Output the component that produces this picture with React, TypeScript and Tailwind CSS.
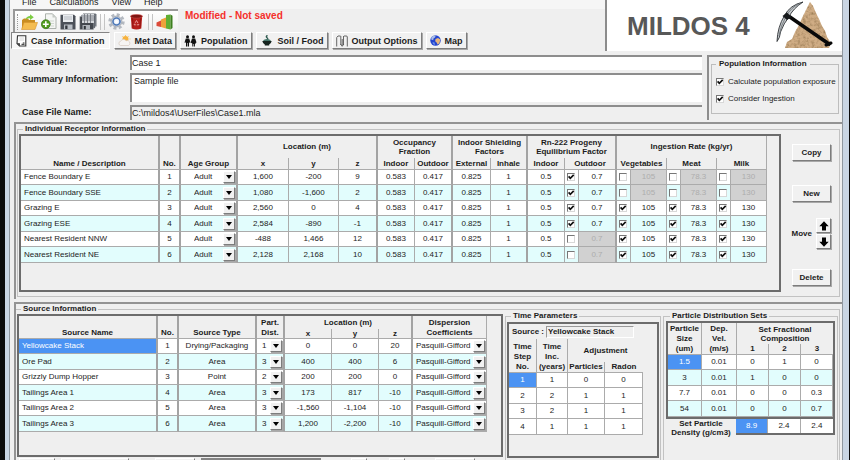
import React from 'react';

type Receptor = {
  name: string;
  x: string;
  y: string;
  z: string;
  outdoor: boolean;
  ingestion: boolean;
};

const receptors: Receptor[] = [
  { name: 'Fence Boundary E', x: '1,600', y: '-200', z: '9', outdoor: true, ingestion: false },
  { name: 'Fence Boundary SSE', x: '1,080', y: '-1,600', z: '2', outdoor: true, ingestion: false },
  { name: 'Grazing E', x: '2,560', y: '0', z: '4', outdoor: true, ingestion: true },
  { name: 'Grazing ESE', x: '2,584', y: '-890', z: '-1', outdoor: true, ingestion: true },
  { name: 'Nearest Resident NNW', x: '-488', y: '1,466', z: '12', outdoor: false, ingestion: true },
  { name: 'Nearest Resident NE', x: '2,128', y: '2,168', z: '10', outdoor: false, ingestion: true },
];

const sources = [
  { name: 'Yellowcake Stack', type: 'Drying/Packaging', dist: '1', x: '0', y: '0', z: '20' },
  { name: 'Ore Pad', type: 'Area', dist: '3', x: '400', y: '400', z: '6' },
  { name: 'Grizzly Dump Hopper', type: 'Point', dist: '2', x: '200', y: '200', z: '0' },
  { name: 'Tailings Area 1', type: 'Area', dist: '3', x: '173', y: '817', z: '-10' },
  { name: 'Tailings Area 2', type: 'Area', dist: '3', x: '-1,560', y: '-1,104', z: '-10' },
  { name: 'Tailings Area 3', type: 'Area', dist: '3', x: '1,200', y: '-2,200', z: '-10' },
];

const timeSteps = [
  ['1', '1', '0', '0'],
  ['2', '2', '1', '1'],
  ['3', '2', '1', '1'],
  ['4', '1', '1', '1'],
];

const particles = [
  ['1.5', '0.01', '0', '1', '0'],
  ['3', '0.01', '1', '0', '0'],
  ['7.7', '0.01', '0', '0', '0.3'],
  ['54', '0.01', '0', '0', '0.7'],
];

const ingestionRates = [
  { label: 'Vegetables', value: '105' },
  { label: 'Meat', value: '78.3' },
  { label: 'Milk', value: '130' },
];

const tableBase = 'w-full table-fixed border-separate border-spacing-0 text-center text-[8px] leading-[10px]';
const raised = 'border border-t-white border-l-white border-r-[#7d7d7d] border-b-[#7d7d7d] bg-[#f1f1f1] shadow-[1px_1px_0_#a8a8a8]';
const major = 'border-r-2 border-r-[#a3a3a3]';
const minor = 'border-r border-r-[#ababab]';
const under = 'border-b border-b-[#ababab]';
const selected = 'bg-[#4b93f3] text-white';

/* ---------- small controls ---------- */

const CheckBox: React.FC<{ label: string; checked: boolean; id?: string }> = ({ label, checked, id }) => (
  <span className="mx-auto grid size-2 shrink-0">
    <input
      id={id}
      type="checkbox"
      aria-label={label}
      defaultChecked={checked}
      className="peer col-start-1 row-start-1 size-2 appearance-none border border-t-[#777] border-l-[#777] border-r-[#d8d8d8] border-b-[#d8d8d8] bg-white"
    />
    <svg viewBox="0 0 8 8" className="pointer-events-none invisible col-start-1 row-start-1 size-2 peer-checked:visible">
      <path d="M1.6 3.4 3.3 5.3 6.7 1.9" fill="none" stroke="#111" strokeWidth="1.7" />
    </svg>
  </span>
);

const DropDown: React.FC<{ label: string; value: string; options: string[]; pad: string }> = ({ label, value, options, pad }) => (
  <span className="grid items-center">
    <select
      aria-label={label}
      defaultValue={value}
      className={`col-start-1 row-start-1 h-[14px] w-full appearance-none bg-transparent text-[8px] leading-[14px] ${pad}`}
    >
      {options.map((o) => (
        <option key={o}>{o}</option>
      ))}
    </select>
    <span className={`pointer-events-none col-start-1 row-start-1 mr-px grid size-3 place-items-center justify-self-end ${raised}`}>
      <svg viewBox="0 0 6 4" className="h-1 w-1.5">
        <path d="M0 0H6L3 4Z" fill="#000" />
      </svg>
    </span>
  </span>
);

const PushButton: React.FC<{ children: React.ReactNode; className?: string }> = ({ children, className = '' }) => (
  <button type="button" className={`h-[17px] w-[39px] text-[8px] font-bold ${raised} ${className}`}>
    {children}
  </button>
);

/* ---------- icons ---------- */

const OpenIcon = () => (
  <svg viewBox="0 0 17 16" className="h-4 w-[17px]">
    <path d="M1 6 3 4.5H7L8 6H14V15H1Z" fill="#c98d22" />
    <path d="M3 8.5H16.5L14 15.5H.5Z" fill="#f4bc50" stroke="#d6942b" strokeWidth=".6" />
    <path d="M4.5 6C5 3 7 2 9 2V.3L12.8 3.2 9 6V4.3C7.5 4.3 6 4.6 4.5 6Z" fill="#7ccc43" />
  </svg>
);

const NewIcon = () => (
  <svg viewBox="0 0 16 17" className="h-[17px] w-4">
    <path d="M4.5 .8H11.5L15 4.5V15.5H4.5Z" fill="#f4f6f4" stroke="#a5aaa5" strokeWidth=".9" />
    <path d="M11.5 .8V4.5H15Z" fill="#c5cac5" />
    <path d="M8 8H13M9 10.5H13M10 13H13" stroke="#c9cfc9" strokeWidth=".8" />
    <circle cx="4.8" cy="11.2" r="4.5" fill="#4f9a1c" stroke="#2f6911" strokeWidth=".6" />
    <path d="M4.8 8.3V14.1M1.9 11.2H7.7" stroke="#fff" strokeWidth="1.6" />
  </svg>
);

const SaveIcon = () => (
  <svg viewBox="0 0 16 16" className="size-4">
    <path d="M.5 .8H14L15.5 2.3V15.5H.5Z" fill="#4c5159" />
    <path d="M3 1H13V8H3Z" fill="#e9ecef" />
    <path d="M4 3H12M4 5H12" stroke="#aab0b8" strokeWidth=".8" />
    <path d="M4 10.5H12.5V15.5H4Z" fill="#b9bec5" />
    <path d="M5.2 11.5H7.5V15H5.2Z" fill="#33373d" />
  </svg>
);

const SaveAllIcon = () => (
  <svg viewBox="0 0 18 17" className="h-[17px] w-[18px]">
    <path d="M4 .5H16.5L17.5 1.5V13.5H4Z" fill="#6d7279" />
    <path d="M2.5 2H15L16 3V15H2.5Z" fill="#555a61" stroke="#9a9fa6" strokeWidth=".4" />
    <path d="M.8 3.5H13.5L14.5 4.5V16.5H.8Z" fill="#43474e" stroke="#a3a8ae" strokeWidth=".4" />
    <path d="M3 1H15V10H3Z" fill="#d5d8dc" />
    <path d="M3 3H15M3 5H15M3 7H15M5.5 1V10M8.5 1V10M11.5 1V10" stroke="#6b7077" strokeWidth=".8" />
    <path d="M3.5 12H11V16.5H3.5Z" fill="#aeb3ba" />
    <path d="M4.8 13H6.8V16.3H4.8Z" fill="#2f3338" />
  </svg>
);

const GearIcon = () => (
  <svg viewBox="0 0 17 17" className="size-[17px]">
    <circle cx="8.5" cy="8.5" r="6.9" fill="none" stroke="#b4b9c0" strokeWidth="2.6" strokeDasharray="3 2.42" />
    <circle cx="8.5" cy="8.5" r="5.4" fill="#ccd1d8" stroke="#a5abb4" strokeWidth="1" />
    <circle cx="8.5" cy="8.5" r="3.5" fill="#e9f0fa" stroke="#4d78b8" strokeWidth="1.6" />
    <circle cx="8.5" cy="8.5" r="1.5" fill="#fff" />
  </svg>
);

const TrashIcon = () => (
  <svg viewBox="0 0 13 16" className="mx-0.5 h-4 w-[13px]">
    <path d="M.8 2H12.2L11.3 14.5Q6.5 16.5 1.7 14.5Z" fill="#b51f1b" />
    <path d="M2.5 4 3 13.5M10.5 4 10 13.5" stroke="#8a1210" strokeWidth=".8" />
    <ellipse cx="6.5" cy="2.3" rx="6" ry="1.9" fill="#7f1512" stroke="#d1504b" strokeWidth=".6" />
    <path d="M6.5 6.5 8.9 10.8H4.1Z" fill="none" stroke="#e79a97" strokeWidth="1" strokeDasharray="3 1" />
  </svg>
);

const ChartIcon = () => (
  <svg viewBox="0 0 17 16" className="h-4 w-[17px]">
    <path d="M.5 8.5 5 6.5V13L.5 12Z" fill="#dc4b3a" />
    <path d="M5 5.5 10 3.5V14.5L5 13Z" fill="#eda23a" />
    <path d="M10 1 14.5 .5V15.5L10 14.5Z" fill="#5fae33" />
    <path d="M14.5 .5 16.5 1.8V14L14.5 15.5Z" fill="#3d7f1f" />
  </svg>
);

const CaseIcon = () => (
  <svg viewBox="0 0 11 12" className="h-3 w-[11px]">
    <path d="M1.5 .8H9.8V11H3.5L1 8.5Z" fill="#fff" stroke="#333" strokeWidth="1.1" />
    <path d="M.8 8 4 8.2 4 11.4Z" fill="#444" />
    <path d="M5.5 9.3H8.5M6.8 8H8.5" stroke="#222" strokeWidth="1" />
    <path d="M3.5 3H8M3.5 5H8" stroke="#c6c6c6" strokeWidth=".7" />
  </svg>
);

const WeatherIcon = () => (
  <svg viewBox="0 0 13 11" className="h-[11px] w-[13px]">
    <circle cx="7.5" cy="4" r="3" fill="#f7b23c" />
    <path d="M7.5 0V1M11.5 4H12.5M4 1 4.6 1.7M11 1 10.4 1.7" stroke="#f7c25f" strokeWidth=".9" />
    <path d="M2.5 10.5A2.2 2.2 0 0 1 2.8 6.2 2.9 2.9 0 0 1 8 5.8 2.4 2.4 0 0 1 10.5 10.5Z" fill="#f6f4f2" stroke="#cbb9aa" strokeWidth=".5" />
  </svg>
);

const PeopleIcon = () => (
  <svg viewBox="0 0 13 12" className="h-3 w-[13px]">
    <circle cx="3.5" cy="1.8" r="1.5" fill="#111" />
    <circle cx="9.5" cy="1.8" r="1.5" fill="#111" />
    <path d="M1.8 3.6H5.2L6.5 7.5 5.6 8 5 6.5V11.5H3.8V8H3.2V11.5H2V6.5L1.4 8 .5 7.5Z" fill="#111" />
    <path d="M8 3.6H11.2L12.5 7.5 11.6 8 11.4 9H10.9V11.5H9.9V9H9.3V11.5H8.3V8.5L7.5 8 6.7 7.5Z" fill="#111" />
  </svg>
);

const BowlIcon = () => (
  <svg viewBox="0 0 10 11" className="mx-0.5 h-[11px] w-2.5">
    <path d="M5.5 .3Q3.5 1.5 5 2.7T5 5" fill="none" stroke="#2f5a50" strokeWidth="1.4" />
    <path d="M2 4.8Q5 3 8 4.8L9 6H1Z" fill="#47786c" />
    <path d="M.3 6H9.7Q9.2 8.8 7.2 9.4V10.5H2.8V9.4Q.8 8.8 .3 6Z" fill="#16241f" />
  </svg>
);

const OutputIcon = () => (
  <svg viewBox="0 0 12 12" className="size-3">
    <path d="M.7 11.5V2.5L2 1H4.5M4.8 1V10M7.5 1V10M8 1H10.8L11.3 2V11.5" fill="none" stroke="#666" strokeWidth="1" />
    <path d="M6.2 4V10.5M4.5 9 6.2 11.3 7.9 9" fill="none" stroke="#555" strokeWidth=".9" />
  </svg>
);

const GlobeIcon = () => (
  <svg viewBox="0 0 11 11" className="size-[11px]">
    <circle cx="5.5" cy="5.5" r="5.2" fill="#2345cf" />
    <path d="M1.5 2.3Q3.5 0 5.8 .6L5 2.5 3.5 3.5 3.2 5.3 1.2 4.5Z" fill="#a9bde6" />
    <path d="M5.5 4 8 3 10.3 4.5 9.5 8 7.8 9.8 6.6 7.5 5.2 6.3Z" fill="#e7b67c" />
    <path d="M2.5 7 4.5 7.5 5 10 3 9Z" fill="#6d8fe8" />
  </svg>
);

const RockLogo = () => (
  <svg viewBox="0 0 62 50" className="h-[50px] w-[62px]" role="img" aria-label="Pickaxe and rock">
    <defs>
      <filter id="grain" x="0" y="0" width="1" height="1">
        <feTurbulence type="fractalNoise" baseFrequency=".35" numOctaves="3" seed="4" />
        <feColorMatrix values="0 0 0 0 .35  0 0 0 0 .22  0 0 0 0 .1  2.2 0 0 0 -.9" />
        <feComposite in2="SourceGraphic" operator="in" result="noise" />
        <feMerge>
          <feMergeNode in="SourceGraphic" />
          <feMergeNode in="noise" />
        </feMerge>
      </filter>
    </defs>
    <path
      d="M38 1 34 9 30 17 27 24 23 31 20 38 15 41 13 47H57L59 42 55 36 53 30 50 25 47 18 44 12 41 5Z"
      fill="#cfac84"
      filter="url(#grain)"
    />
    <path d="M15 14 57 43" stroke="#080808" strokeWidth="3.6" strokeLinecap="round" />
    <path d="M54 44 59 42" stroke="#080808" strokeWidth="3" strokeLinecap="round" />
    <path d="M31 1Q18 4 12.5 14.5Q5.5 26 5 40.5Q8 37 8.5 31Q12 22 16.5 16.5Q21 7.5 31 1Z" fill="#c3c7ca" stroke="#2e3235" strokeWidth=".9" />
    <path d="M28 2.5Q19 6 14 15.5Q8.5 25 7 35" fill="none" stroke="#70767b" strokeWidth=".9" />
    <path d="M10.5 15 15 11.5 19.5 16 15 19Z" fill="#16191b" />
  </svg>
);

/* ---------- header ---------- */

const ToolButton: React.FC<{ label: string; children: React.ReactNode }> = ({ label, children }) => (
  <button type="button" aria-label={label} className="grid place-items-center">
    {children}
  </button>
);

const ToolSeparator = () => (
  <span className="flex h-4 gap-[3px]">
    <span className="w-px bg-[#c4c4c4]" />
    <span className="w-px bg-[#c4c4c4]" />
  </span>
);

const Tab: React.FC<{ label: string; icon: React.ReactNode; active?: boolean }> = ({ label, icon, active }) => (
  <button
    type="button"
    className={`flex h-[17px] items-center text-[9px] leading-3 font-bold whitespace-nowrap ${
      active
        ? 'gap-1 border border-t-[#858585] border-l-[#858585] border-r-white border-b-white bg-[#f7f7f7] px-1'
        : `gap-1 px-[3px] ${raised}`
    }`}
  >
    {icon}
    {label}
  </button>
);

const Header = () => (
  <header className="flex justify-between">
    <div className="min-w-0 flex-1">
      <nav className="flex h-[9px] items-end gap-[13px] bg-[#f6f6f6] pb-px pl-3 text-[9px] leading-[11px]">
        <a href="#file">File</a>
        <a href="#calculations">Calculations</a>
        <a href="#view">View</a>
        <a href="#help">Help</a>
      </nav>
      <div className="flex items-start pl-[3px]">
        <div className="flex h-[23px] items-center gap-[3px] border-t-2 border-l-2 border-t-[#999] border-l-[#999] bg-gradient-to-b from-white to-[#efefef] pr-[5px] pl-0.5">
          <span className="h-4 border-l border-dotted border-[#999]" />
          <ToolButton label="Open"><OpenIcon /></ToolButton>
          <ToolButton label="New"><NewIcon /></ToolButton>
          <ToolButton label="Save"><SaveIcon /></ToolButton>
          <ToolButton label="Save all"><SaveAllIcon /></ToolButton>
          <ToolSeparator />
          <ToolButton label="Settings"><GearIcon /></ToolButton>
          <ToolButton label="Delete case"><TrashIcon /></ToolButton>
          <ToolSeparator />
          <ToolButton label="Results"><ChartIcon /></ToolButton>
        </div>
        <p className="ml-[7px] text-[10px] leading-[13px] font-bold text-[#f5302b]">Modified - Not saved</p>
      </div>
      <div className="flex gap-1 pl-px">
        <Tab active label="Case Information" icon={<CaseIcon />} />
        <Tab label="Met Data" icon={<WeatherIcon />} />
        <Tab label="Population" icon={<PeopleIcon />} />
        <Tab label="Soil / Food" icon={<BowlIcon />} />
        <Tab label="Output Options" icon={<OutputIcon />} />
        <Tab label="Map" icon={<GlobeIcon />} />
      </div>
    </div>
    <div className="flex h-[51px] w-[237px] items-center justify-between border-l-2 border-[#8c8c8c] bg-white pr-2 pl-5">
      <h1 className="text-[26px] leading-[30px] font-bold whitespace-nowrap text-[#585858]">MILDOS 4</h1>
      <RockLogo />
    </div>
  </header>
);

const field = 'border-t-2 border-l-2 border-t-[#8d8d8d] border-l-[#8d8d8d] text-[9px]';

const CaseForm = () => (
  <section className="mt-1 flex gap-[5px] pl-3">
    <div className="grid flex-1 grid-cols-[108px_1fr] content-start gap-y-[3px] text-[9px] leading-[14px]">
      <label htmlFor="title" className="font-bold">Case Title:</label>
      <input id="title" defaultValue="Case 1" className={`h-[15px] bg-white pb-0.5 ${field}`} />
      <label htmlFor="summary" className="font-bold leading-[12px]">Summary Information:</label>
      <textarea id="summary" defaultValue="Sample file" className={`h-[29px] resize-none bg-white pl-0.5 leading-[13px] ${field}`} />
      <label htmlFor="path" className="font-bold">Case File Name:</label>
      <input id="path" readOnly value="C:\mildos4\UserFiles\Case1.mla" className={`h-[15px] bg-[#efefef] pb-0.5 ${field}`} />
    </div>
    <div className="w-[135px] border-t-2 border-l-2 border-[#8d8d8d] pt-0.5 pr-[3px] pl-0.5">
      <fieldset className="h-[55px] border border-[#bdbdbd] text-[8px]">
        <legend className="ml-1 px-[3px] leading-[10px] font-bold">Population Information</legend>
        <div className="flex flex-col gap-[7px] pt-2 pl-1">
          <div className="flex items-center gap-1 leading-[10px]">
            <span className="flex"><CheckBox id="exposure" label="Calculate population exposure" checked /></span>
            <label htmlFor="exposure" className="whitespace-nowrap">Calculate population exposure</label>
          </div>
          <div className="flex items-center gap-1 leading-[10px]">
            <span className="flex"><CheckBox id="ingestion" label="Consider Ingestion" checked /></span>
            <label htmlFor="ingestion" className="whitespace-nowrap">Consider Ingestion</label>
          </div>
        </div>
      </fieldset>
    </div>
  </section>
);

/* ---------- receptors ---------- */

const ReceptorTable = () => (
  <table className={tableBase}>
    <colgroup>
      <col />
      <col className="w-[21px]" />
      <col className="w-[57px]" />
      <col className="w-[51px]" />
      <col className="w-[50px]" />
      <col className="w-[39px]" />
      <col className="w-[37px]" />
      <col className="w-[38px]" />
      <col className="w-[38px]" />
      <col className="w-[37px]" />
      <col className="w-[37px]" />
      <col className="w-[14px]" />
      <col className="w-[38px]" />
      <col className="w-[14px]" />
      <col className="w-[36px]" />
      <col className="w-[14px]" />
      <col className="w-[36px]" />
      <col className="w-[14px]" />
      <col className="w-[36px]" />
    </colgroup>
    <thead>
      <tr className="h-[22px]">
        <th rowSpan={2} className={`align-bottom ${major} ${under}`}>Name / Description</th>
        <th rowSpan={2} className={`align-bottom ${major} ${under}`}>No.</th>
        <th rowSpan={2} className={`align-bottom ${major} ${under}`}>Age Group</th>
        <th colSpan={3} className={major}>Location (m)</th>
        <th colSpan={2} className={`leading-[9px] ${major}`}>Occupancy<br />Fraction</th>
        <th colSpan={2} className={`leading-[9px] whitespace-nowrap ${major}`}>Indoor Shielding<br />Factors</th>
        <th colSpan={3} className={`leading-[9px] whitespace-nowrap ${major}`}>Rn-222 Progeny<br />Equilibrium Factor</th>
        <th colSpan={6} className={minor}>Ingestion Rate (kg/yr)</th>
      </tr>
      <tr className="h-3">
        <th className={`${minor} ${under}`}>x</th>
        <th className={`${minor} ${under}`}>y</th>
        <th className={`${major} ${under}`}>z</th>
        <th className={`${minor} ${under}`}>Indoor</th>
        <th className={`${major} ${under}`}>Outdoor</th>
        <th className={`${minor} ${under}`}>External</th>
        <th className={`${major} ${under}`}>Inhale</th>
        <th className={`${minor} ${under}`}>Indoor</th>
        <th colSpan={2} className={`${major} ${under}`}>Outdoor</th>
        {ingestionRates.map((r) => (
          <th key={r.label} colSpan={2} className={`${minor} ${under}`}>{r.label}</th>
        ))}
      </tr>
    </thead>
    <tbody>
      {receptors.map((r, i) => (
        <tr key={r.name} className="h-4 bg-white odd:h-[15px] even:bg-[#e2fdfd]">
          <td className={`pl-[3px] text-left ${major} ${under}`}>{r.name}</td>
          <td className={`${major} ${under}`}>{i + 1}</td>
          <td className={`${major} ${under}`}>
            <DropDown label={`Age group of ${r.name}`} value="Adult" options={['Infant', 'Child', 'Teenager', 'Adult']} pad="pl-[13px]" />
          </td>
          <td className={`${minor} ${under}`}>{r.x}</td>
          <td className={`${minor} ${under}`}>{r.y}</td>
          <td className={`${major} ${under}`}>{r.z}</td>
          <td className={`${minor} ${under}`}>0.583</td>
          <td className={`${major} ${under}`}>0.417</td>
          <td className={`${minor} ${under}`}>0.825</td>
          <td className={`${major} ${under}`}>1</td>
          <td className={`${minor} ${under}`}>0.5</td>
          <td className={`${minor} ${under}`}>
            <CheckBox label={`Outdoor factor for ${r.name}`} checked={r.outdoor} />
          </td>
          <td className={`${major} ${under} ${r.outdoor ? '' : 'bg-[#d1d1d1] text-[#adadad]'}`}>0.7</td>
          {ingestionRates.map((rate) => (
            <React.Fragment key={rate.label}>
              <td className={`${minor} ${under}`}>
                <CheckBox label={`${rate.label} for ${r.name}`} checked={r.ingestion} />
              </td>
              <td className={`${minor} ${under} ${r.ingestion ? '' : 'bg-[#d1d1d1] text-[#adadad]'}`}>{rate.value}</td>
            </React.Fragment>
          ))}
        </tr>
      ))}
    </tbody>
  </table>
);

const ArrowButton: React.FC<{ label: string; down?: boolean }> = ({ label, down }) => (
  <button type="button" aria-label={label} className={`grid size-[15px] place-items-center ${raised}`}>
    <svg viewBox="0 0 10 10" className={down ? 'size-2.5 rotate-180' : 'size-2.5'}>
      <path d="M5 .3 9.7 5.2H7V9.5H3V5.2H.3Z" fill="#000" />
    </svg>
  </button>
);

const ReceptorPanel = () => (
  <section className="mt-0.5 ml-1 border-t-2 border-l-2 border-[#939393] pr-0.5 pb-0.5 pl-px">
    <fieldset className="border border-[#c2c2c2] pb-1">
      <legend className="ml-[5px] px-0.5 text-[8px] leading-[10px] font-bold">Individual Receptor Information</legend>
      <div className="flex pl-px">
        <div className="flex-1 border-2 border-[#6c6c6c] pr-3 pb-[27px]">
          <ReceptorTable />
        </div>
        <div className="flex w-[58px] flex-col items-end pt-2.5 pr-2 text-[8px] font-bold">
          <PushButton>Copy</PushButton>
          <PushButton className="mt-6">New</PushButton>
          <div className="mt-4 flex items-center gap-1">
            <span>Move</span>
            <div className="flex flex-col gap-px">
              <ArrowButton label="Move up" />
              <ArrowButton label="Move down" down />
            </div>
          </div>
          <PushButton className="mt-5">Delete</PushButton>
        </div>
      </div>
    </fieldset>
  </section>
);

/* ---------- sources, time steps, particles ---------- */

const SourceTable = () => (
  <table className={tableBase}>
    <colgroup>
      <col />
      <col className="w-[21px]" />
      <col className="w-[78px]" />
      <col className="w-[28px]" />
      <col className="w-[47px]" />
      <col className="w-[47px]" />
      <col className="w-[34px]" />
      <col className="w-[74px]" />
    </colgroup>
    <thead>
      <tr className="h-[13px]">
        <th rowSpan={2} className={`align-bottom ${major} ${under}`}>Source Name</th>
        <th rowSpan={2} className={`align-bottom ${major} ${under}`}>No.</th>
        <th rowSpan={2} className={`align-bottom ${major} ${under}`}>Source Type</th>
        <th rowSpan={2} className={`align-bottom ${major} ${under}`}>Part.<br />Dist.</th>
        <th colSpan={3} className={major}>Location (m)</th>
        <th rowSpan={2} className={`align-bottom ${minor} ${under}`}>Dispersion<br />Coefficients</th>
      </tr>
      <tr className="h-[10px]">
        <th className={`leading-[9px] ${minor} ${under}`}>x</th>
        <th className={`leading-[9px] ${minor} ${under}`}>y</th>
        <th className={`leading-[9px] ${major} ${under}`}>z</th>
      </tr>
    </thead>
    <tbody>
      {sources.map((s, i) => (
        <tr key={s.name} className="h-4 bg-white odd:h-[15px] even:bg-[#e2fdfd]">
          <td className={`pl-[3px] text-left ${major} ${under} ${i === 0 ? selected : ''}`}>{s.name}</td>
          <td className={`${major} ${under}`}>{i + 1}</td>
          <td className={`${major} ${under}`}>{s.type}</td>
          <td className={`${major} ${under}`}>
            <DropDown label={`Particle distribution of ${s.name}`} value={s.dist} options={['1', '2', '3']} pad="pl-[5px]" />
          </td>
          <td className={`${minor} ${under}`}>{s.x}</td>
          <td className={`${minor} ${under}`}>{s.y}</td>
          <td className={`${major} ${under}`}>{s.z}</td>
          <td className={`${minor} ${under}`}>
            <DropDown label={`Dispersion of ${s.name}`} value="Pasquill-Gifford" options={['Pasquill-Gifford', 'Briggs']} pad="pl-[3px]" />
          </td>
        </tr>
      ))}
    </tbody>
  </table>
);

const TimePanel = () => (
  <fieldset className="-mt-[3px] w-[156px] border border-[#c2c2c2] px-px pt-px">
    <legend className="ml-1 px-0.5 text-[8px] leading-[10px] font-bold">Time Parameters</legend>
    <div className="h-[136px] border-2 border-[#6c6c6c] pr-[14px]">
      <div className="flex h-[15px] items-center gap-0.5 pl-[3px] text-[8px] font-bold">
        <label htmlFor="source" className="whitespace-nowrap">Source :</label>
        <input id="source" readOnly value="Yellowcake Stack" className="h-3 w-[88px] border border-t-[#999] border-l-[#999] border-r-white border-b-white pl-px leading-[10px]" />
      </div>
      <table className={tableBase}>
        <colgroup>
          <col />
          <col className="w-[31px]" />
          <col className="w-[37px]" />
          <col className="w-[38px]" />
        </colgroup>
        <thead>
          <tr className="h-[23px]">
            <th rowSpan={2} className={`align-bottom ${minor} ${under}`}>Time<br />Step<br />No.</th>
            <th rowSpan={2} className={`align-bottom ${minor} ${under}`}>Time<br />Inc.<br />(years)</th>
            <th colSpan={2}>Adjustment</th>
          </tr>
          <tr className="h-[11px]">
            <th className={`${minor} ${under}`}>Particles</th>
            <th className={under}>Radon</th>
          </tr>
        </thead>
        <tbody>
          {timeSteps.map((row, i) => (
            <tr key={row[0]} className="h-4 bg-white odd:h-[15px]">
              {row.map((v, j) => (
                <td key={j} className={`${minor} ${under} ${i === 0 && j === 0 ? selected : ''}`}>{v}</td>
              ))}
            </tr>
          ))}
        </tbody>
      </table>
    </div>
  </fieldset>
);

const ParticlePanel = () => (
  <fieldset className="-mt-[3px] w-[175px] border border-[#c2c2c2] px-0.5">
    <legend className="ml-1 px-0.5 text-[8px] leading-[10px] font-bold">Particle Distribution Sets</legend>
    <div className="border-2 border-[#6c6c6c]">
      <table className={tableBase}>
        <colgroup>
          <col />
          <col className="w-[35px]" />
          <col className="w-[32px]" />
          <col className="w-[32px]" />
          <col className="w-[32px]" />
        </colgroup>
        <thead>
          <tr className="h-[21px]">
            <th rowSpan={2} className={`align-bottom ${minor} ${under}`}>Particle<br />Size<br />(um)</th>
            <th rowSpan={2} className={`align-bottom ${minor} ${under}`}>Dep.<br />Vel.<br />(m/s)</th>
            <th colSpan={3} className="leading-[9px]">Set Fractional<br />Composition</th>
          </tr>
          <tr className="h-[11px]">
            <th className={`${minor} ${under}`}>1</th>
            <th className={`${minor} ${under}`}>2</th>
            <th className={under}>3</th>
          </tr>
        </thead>
        <tbody>
          {particles.map((row, i) => (
            <tr key={row[0]} className="h-4 bg-white odd:h-[15px] even:bg-[#e2fdfd]">
              {row.map((v, j) => (
                <td key={j} className={`${minor} ${under} ${i === 0 && j === 0 ? selected : ''}`}>{v}</td>
              ))}
            </tr>
          ))}
        </tbody>
      </table>
    </div>
    <div className="flex text-center text-[8px] font-bold">
      <p className="flex-1 leading-[9px] whitespace-nowrap">Set Particle<br />Density (g/cm3)</p>
      <dl className="grid h-4 w-[99px] grid-cols-3 border-r-2 border-b-2 border-[#6c6c6c] bg-white leading-[14px] font-normal">
        <dd className={`${minor} ${selected}`}>8.9</dd>
        <dd className={minor}>2.4</dd>
        <dd>2.4</dd>
      </dl>
    </div>
  </fieldset>
);

const BottomEdge: React.FC<{ className: string }> = ({ className }) => (
  <span className={`h-4 border border-t-white border-l-white border-r-[#7d7d7d] bg-[#f1f1f1] ${className}`} />
);

const SourcePanel = () => (
  <section className="mt-[3px] ml-1 flex-1 border-t-2 border-l-2 border-[#939393] pr-0.5">
    <fieldset className="border-t border-r border-[#c2c2c2] pl-px">
      <legend className="ml-1 px-0.5 text-[8px] leading-[10px] font-bold">Source Information</legend>
      <div className="flex gap-0.5 pr-px">
        <div className="min-w-0 flex-1">
          <div className="border-2 border-[#6c6c6c] pr-[14px] pb-[23px]">
            <SourceTable />
          </div>
          <div className="mt-px flex gap-1.5 pl-0.5">
            <BottomEdge className="w-9" />
            <BottomEdge className="w-[68px]" />
            <BottomEdge className="ml-5 w-10" />
            <span className="h-4 w-[120px] border-t-2 border-l-2 border-[#858585]" />
            <BottomEdge className="ml-6 w-4" />
            <BottomEdge className="ml-4 w-4" />
            <BottomEdge className="ml-6 w-10" />
          </div>
        </div>
        <TimePanel />
        <ParticlePanel />
      </div>
    </fieldset>
  </section>
);

export default function App() {
  return (
    <div className="flex h-screen overflow-hidden bg-[#0b0b0b] pr-px pl-[5px] font-['Liberation_Sans',Arial,sans-serif] text-[#1c1c1c]">
      <div className="flex min-w-0 flex-1 border-r-[6px] border-l-4 border-[#c9d5e3]">
        <main className="flex min-w-0 flex-1 flex-col border-x border-[#8f979f] bg-[#efefef]">
          <Header />
          <CaseForm />
          <ReceptorPanel />
          <SourcePanel />
        </main>
      </div>
    </div>
  );
}
